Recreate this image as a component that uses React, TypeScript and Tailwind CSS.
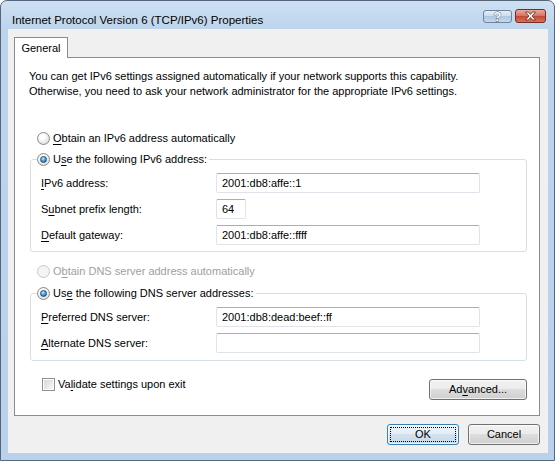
import React from "react";

// Windows 7 style "Internet Protocol Version 6 (TCP/IPv6) Properties" dialog

const U = ({ children }: { children: React.ReactNode }) => (
  <span className="underline decoration-1 underline-offset-[2px]">{children}</span>
);

function Radio({ checked = false, disabled = false }: { checked?: boolean; disabled?: boolean }) {
  return (
    <span
      className={`flex h-[13px] w-[13px] shrink-0 items-center justify-center rounded-full border ${
        disabled
          ? "border-[#c9c9c9] bg-[#f4f4f4]"
          : "border-[#8a8a8a] bg-[radial-gradient(circle_at_40%_35%,#ffffff_20%,#d8d8d8_90%)]"
      }`}
    >
      {checked && (
        <span className="h-[7px] w-[7px] rounded-full border border-[#1a4c7a] bg-[radial-gradient(circle_at_40%_30%,#c2ecff_0%,#3d97d8_55%,#145a9c_100%)]" />
      )}
    </span>
  );
}

function Checkbox() {
  return (
    <span className="flex h-[13px] w-[13px] shrink-0 items-center justify-center border border-[#8e8f8f] bg-white">
      <span className="h-[9px] w-[9px] bg-[linear-gradient(135deg,#d7d8d9,#f7f7f7)]" />
    </span>
  );
}

function TextBox({ value = "", width }: { value?: string; width: string }) {
  return (
    <div
      className={`${width} flex h-[20px] items-center rounded-[2px] border border-[#e2e3ea] border-t-[#abadb3] bg-white pl-[5px] text-[11px] text-black`}
    >
      {value}
    </div>
  );
}

function Field({ label, value, width = "w-[264px]" }: { label: React.ReactNode; value?: string; width?: string }) {
  return (
    <div className="flex h-[20px] items-center">
      <div className="w-[175px]">{label}</div>
      <TextBox value={value} width={width} />
    </div>
  );
}

function Button({ children, width, primary = false }: { children: React.ReactNode; width: string; primary?: boolean }) {
  return (
    <div
      className={`${width} flex h-[21px] items-center justify-center rounded-[3px] border p-[2px] ${
        primary
          ? "border-[#3c7fb1] bg-[linear-gradient(to_bottom,#eef5fa_0%,#e3edf5_50%,#d3e2ee_50%,#c6d8e8_100%)]"
          : "border-[#707070] bg-[linear-gradient(to_bottom,#f2f2f2_0%,#ebebeb_50%,#dddddd_50%,#cfcfcf_100%)]"
      } shadow-[inset_0_0_0_1px_rgba(255,255,255,0.7)]`}
    >
      <div
        className={`flex h-full w-full items-center justify-center ${
          primary ? "border border-dotted border-black" : ""
        }`}
      >
        {children}
      </div>
    </div>
  );
}

export default function App() {
  return (
    <div className="h-[461px] w-[555px] bg-white font-['Liberation_Sans',Arial,sans-serif] text-[11px] text-black">
      <div className="flex h-full w-full flex-col rounded-t-[7px] border border-[#55667a] bg-[linear-gradient(to_bottom,#cfe0f2_0px,#bcd4ec_30px,#b9d1ea_100%)]">
        {/* title bar */}
        <div className="flex h-[28px] shrink-0 items-start justify-between pr-[8px] pt-[8px]">
          <div className="pl-[11px] pt-[3px] text-[11.5px] leading-[16px] text-black">
            Internet Protocol Version 6 (TCP/IPv6) Properties
          </div>
          <div className="flex items-start gap-[3px]">
            <div className="mt-[1px] flex h-[13px] w-[29px] items-center justify-center rounded-[3px] border border-[#6d83a0] bg-[linear-gradient(to_bottom,#e4eef9_0%,#c9daee_50%,#afc7e3_50%,#c4d8ef_100%)]">
              <span className="text-[13px] font-bold leading-none text-white [-webkit-text-stroke:0.8px_#4a5566] [paint-order:stroke_fill]">
                ?
              </span>
            </div>
            <div className="flex h-[14px] w-[31px] items-center justify-center rounded-[3px] border border-[#7a2a24] bg-[linear-gradient(to_bottom,#e9a99c_0%,#d9715f_50%,#c4462f_50%,#d3745c_100%)]">
              <svg width="13" height="10" viewBox="0 0 13 10">
                <path
                  d="M1.5 1 L4.5 1 L6.5 3.5 L8.5 1 L11.5 1 L8 5 L11.5 9 L8.5 9 L6.5 6.5 L4.5 9 L1.5 9 L5 5 Z"
                  fill="#ffffff"
                  stroke="#5a2a22"
                  strokeWidth="0.8"
                />
              </svg>
            </div>
          </div>
        </div>

        {/* client area */}
        <div className="mb-[7px] ml-[7px] mr-[6px] flex flex-1 flex-col bg-[#f0f0f0] pl-[6px] pr-[8px] pt-[8px]">
          {/* tab */}
          <div className="relative z-10 -mb-[1px] flex h-[21px] w-[54px] items-center justify-center border border-b-0 border-[#898c95] bg-white">
            General
          </div>

          {/* tab panel */}
          <div className="flex h-[359px] flex-col border border-[#898c95] bg-white">
            <div className="ml-[14px] mt-[11px] leading-[15px]">
              You can get IPv6 settings assigned automatically if your network supports this capability.
              <br />
              Otherwise, you need to ask your network administrator for the appropriate IPv6 settings.
            </div>

            <div className="ml-[22px] mt-[31px] flex h-[16px] items-center gap-[3px]">
              <Radio />
              <span>
                <U>O</U>btain an IPv6 address automatically
              </span>
            </div>

            <fieldset className="ml-[15px] mt-[5px] w-[497px] rounded-[3px] border border-[#d5dfe5] pb-[6px] pl-[6px] pr-[6px]">
              <legend className="flex h-[16px] items-center gap-[3px] pr-[2px]">
                <Radio checked />
                <span>
                  U<U>s</U>e the following IPv6 address:
                </span>
              </legend>
              <div className="mt-[6px] flex flex-col gap-[6px] pl-[4px]">
                <Field
                  label={
                    <>
                      <U>I</U>Pv6 address:
                    </>
                  }
                  value="2001:db8:affe::1"
                />
                <Field
                  label={
                    <>
                      S<U>u</U>bnet prefix length:
                    </>
                  }
                  value="64"
                  width="w-[30px]"
                />
                <Field
                  label={
                    <>
                      <U>D</U>efault gateway:
                    </>
                  }
                  value="2001:db8:affe::ffff"
                />
              </div>
            </fieldset>

            <div className="ml-[22px] mt-[11px] flex h-[16px] items-center gap-[3px] text-[#a0a0a0]">
              <Radio disabled />
              <span>
                O<U>b</U>tain DNS server address automatically
              </span>
            </div>

            <fieldset className="ml-[15px] mt-[6px] w-[497px] rounded-[3px] border border-[#d5dfe5] pb-[7px] pl-[6px] pr-[6px]">
              <legend className="flex h-[16px] items-center gap-[3px] pr-[2px]">
                <Radio checked />
                <span>
                  Us<U>e</U> the following DNS server addresses:
                </span>
              </legend>
              <div className="mt-[6px] flex flex-col gap-[6px] pl-[4px]">
                <Field
                  label={
                    <>
                      <U>P</U>referred DNS server:
                    </>
                  }
                  value="2001:db8:dead:beef::ff"
                />
                <Field
                  label={
                    <>
                      <U>A</U>lternate DNS server:
                    </>
                  }
                />
              </div>
            </fieldset>

            <div className="mt-[15px] flex items-start justify-between">
              <div className="ml-[27px] flex h-[16px] items-center gap-[3px]">
                <Checkbox />
                <span>
                  Va<U>l</U>idate settings upon exit
                </span>
              </div>
              <div className="mr-[12px] mt-[3px]">
                <Button width="w-[98px]">
                  <span>
                    Ad<U>v</U>anced...
                  </span>
                </Button>
              </div>
            </div>
          </div>

          {/* dialog buttons */}
          <div className="mt-[8px] flex justify-end gap-[9px]">
            <Button width="w-[72px]" primary>
              OK
            </Button>
            <Button width="w-[72px]">Cancel</Button>
          </div>
        </div>
      </div>
    </div>
  );
}
